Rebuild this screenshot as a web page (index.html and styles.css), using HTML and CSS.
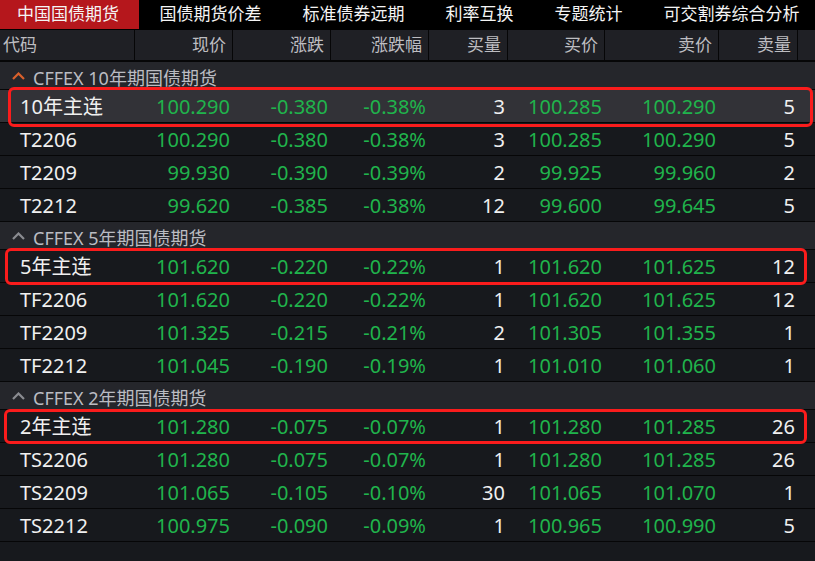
FILE: index.html
```html
<!DOCTYPE html>
<html lang="zh">
<head>
<meta charset="utf-8">
<title>中国国债期货</title>
<link rel="stylesheet" href="styles.css">
</head>
<body>
<div class="app">
  <nav class="tabs">
    <span class="tab active">中国国债期货</span>
    <span class="tab">国债期货价差</span>
    <span class="tab">标准债券远期</span>
    <span class="tab">利率互换</span>
    <span class="tab">专题统计</span>
    <span class="tab">可交割券综合分析</span>
  </nav>

  <div class="grid head">
    <div class="hc left">代码</div>
    <div class="hc">现价</div>
    <div class="hc">涨跌</div>
    <div class="hc">涨跌幅</div>
    <div class="hc">买量</div>
    <div class="hc">买价</div>
    <div class="hc">卖价</div>
    <div class="hc">卖量</div>
    <div class="hc last"></div>
  </div>

  <div class="ghead">
    <svg class="chev orange" width="13" height="8" viewBox="0 0 13 8"><path d="M1 7 L6.5 1.5 L12 7" fill="none" stroke="currentColor" stroke-width="2.2"/></svg>
    <span>CFFEX 10年期国债期货</span>
  </div>
  <div class="grid row sel"><div class="code">10年主连</div><div class="g">100.290</div><div class="g">-0.380</div><div class="g">-0.38%</div><div>3</div><div class="g">100.285</div><div class="g">100.290</div><div>5</div><div></div></div>
  <div class="grid row"><div class="code">T2206</div><div class="g">100.290</div><div class="g">-0.380</div><div class="g">-0.38%</div><div>3</div><div class="g">100.285</div><div class="g">100.290</div><div>5</div><div></div></div>
  <div class="grid row"><div class="code">T2209</div><div class="g">99.930</div><div class="g">-0.390</div><div class="g">-0.39%</div><div>2</div><div class="g">99.925</div><div class="g">99.960</div><div>2</div><div></div></div>
  <div class="grid row"><div class="code">T2212</div><div class="g">99.620</div><div class="g">-0.385</div><div class="g">-0.38%</div><div>12</div><div class="g">99.600</div><div class="g">99.645</div><div>5</div><div></div></div>

  <div class="ghead">
    <svg class="chev grey" width="13" height="8" viewBox="0 0 13 8"><path d="M1 7 L6.5 1.5 L12 7" fill="none" stroke="currentColor" stroke-width="2.2"/></svg>
    <span>CFFEX 5年期国债期货</span>
  </div>
  <div class="grid row"><div class="code">5年主连</div><div class="g">101.620</div><div class="g">-0.220</div><div class="g">-0.22%</div><div>1</div><div class="g">101.620</div><div class="g">101.625</div><div>12</div><div></div></div>
  <div class="grid row"><div class="code">TF2206</div><div class="g">101.620</div><div class="g">-0.220</div><div class="g">-0.22%</div><div>1</div><div class="g">101.620</div><div class="g">101.625</div><div>12</div><div></div></div>
  <div class="grid row"><div class="code">TF2209</div><div class="g">101.325</div><div class="g">-0.215</div><div class="g">-0.21%</div><div>2</div><div class="g">101.305</div><div class="g">101.355</div><div>1</div><div></div></div>
  <div class="grid row"><div class="code">TF2212</div><div class="g">101.045</div><div class="g">-0.190</div><div class="g">-0.19%</div><div>1</div><div class="g">101.010</div><div class="g">101.060</div><div>1</div><div></div></div>

  <div class="ghead">
    <svg class="chev grey" width="13" height="8" viewBox="0 0 13 8"><path d="M1 7 L6.5 1.5 L12 7" fill="none" stroke="currentColor" stroke-width="2.2"/></svg>
    <span>CFFEX 2年期国债期货</span>
  </div>
  <div class="grid row"><div class="code">2年主连</div><div class="g">101.280</div><div class="g">-0.075</div><div class="g">-0.07%</div><div>1</div><div class="g">101.280</div><div class="g">101.285</div><div>26</div><div></div></div>
  <div class="grid row"><div class="code">TS2206</div><div class="g">101.280</div><div class="g">-0.075</div><div class="g">-0.07%</div><div>1</div><div class="g">101.280</div><div class="g">101.285</div><div>26</div><div></div></div>
  <div class="grid row"><div class="code">TS2209</div><div class="g">101.065</div><div class="g">-0.105</div><div class="g">-0.10%</div><div>30</div><div class="g">101.065</div><div class="g">101.070</div><div>1</div><div></div></div>
  <div class="grid row"><div class="code">TS2212</div><div class="g">100.975</div><div class="g">-0.090</div><div class="g">-0.09%</div><div>1</div><div class="g">100.965</div><div class="g">100.990</div><div>5</div><div></div></div>

  <div class="mark m1"></div>
  <div class="mark m2"></div>
  <div class="mark m3"></div>
</div>
</body>
</html>
```

FILE: styles.css
```css
html, body {
  margin: 0;
  padding: 0;
  background: #17191d;
}
body {
  font-family: "Noto Sans", "Noto Sans CJK SC", sans-serif;
  color: #e8e8e8;
}
.app {
  position: relative;
  width: 815px;
  height: 561px;
  overflow: hidden;
  background: #17191d;
}
.tabs {
  display: flex;
  height: 30px;
  background: #000;
  white-space: nowrap;
}
.tab {
  height: 29px;
  line-height: 28px;
  padding: 0 20.5px;
  font-size: 17px;
  color: #f4f4f4;
}
.tab.active {
  background: #b5171c;
  padding: 0 20px 0 17px;
}
.grid {
  display: grid;
  grid-template-columns: 135px 98px 98px 98px 79px 97px 114px 79px 1fr;
}
.head {
  height: 30px;
  background: #1f2025;
  border-bottom: 2px solid #060607;
}
.hc {
  border-right: 1px solid #060607;
  font-size: 17px;
  line-height: 30px;
  text-align: right;
  padding-right: 6px;
  color: #bdbdc1;
  white-space: nowrap;
}
.hc.left {
  text-align: left;
  padding-left: 3px;
}
.hc.last {
  border-right: none;
}
.ghead {
  display: flex;
  align-items: center;
  box-sizing: border-box;
  height: 28px;
  padding-top: 2px;
  border-bottom: 1px solid #060607;
  background: #25262b;
  padding-left: 12px;
  font-size: 18px;
  color: #bbbcc2;
  white-space: nowrap;
}
.chev {
  margin-right: 8px;
  margin-top: -2px;
}
.chev.orange { color: #d8602c; }
.chev.grey { color: #8a8b90; }
.row {
  box-sizing: border-box;
  height: 33px;
  padding-top: 2px;
  border-bottom: 1px solid #060607;
  background: #17191d;
  font-size: 20px;
  line-height: 30px;
  white-space: nowrap;
}
.row.sel {
  background: #323237;
}
.row > div {
  text-align: right;
  padding-right: 3px;
  color: #f0f0f0;
}
.row > div.code {
  text-align: left;
  padding-left: 20px;
  padding-right: 0;
}
.row > div.g {
  color: #20b44c;
}
.mark {
  position: absolute;
  border: 3px solid #fa1c1c;
  border-radius: 6px;
  box-sizing: border-box;
}
.m1 { left: 8px; top: 87px; width: 805px; height: 40px; }
.m2 { left: 5px; top: 248px; width: 802px; height: 37px; }
.m3 { left: 4px; top: 409px; width: 803px; height: 35px; }
```
